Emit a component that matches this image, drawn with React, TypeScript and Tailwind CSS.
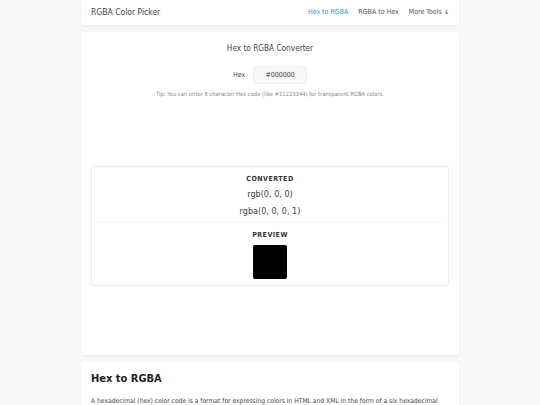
export default function App() {
  return (
    <div
      className="h-[405px] overflow-hidden bg-[#f7f8fa] text-[#333]"
      style={{ fontFamily: '"DejaVu Sans Condensed", "DejaVu Sans", sans-serif' }}
    >
      <div className="mx-auto w-[378px]">
        <header className="flex h-[25px] items-center justify-between rounded-b-[3px] bg-white pr-[10px] pl-[10px] shadow-[0_1px_3px_rgba(0,0,0,0.06)]">
          <span className="text-[8.5px] text-[#3f3f3f]">RGBA Color Picker</span>
          <nav className="flex gap-[10px] text-[7px] text-[#555]">
            <a className="text-[#3594cc]">Hex to RGBA</a>
            <a>RGBA to Hex</a>
            <a>More Tools ↓</a>
          </nav>
        </header>

        <main className="mt-[7px] flex h-[323px] flex-col rounded-[3px] bg-white px-[10px] pt-[10px] shadow-[0_1px_3px_rgba(0,0,0,0.06)]">
          <h1 className="text-center text-[8.2px] leading-[12px] text-[#444]">Hex to RGBA Converter</h1>
          <div className="mt-[12px] flex items-center justify-center gap-[8px]">
            <label className="text-[7px] text-[#444]">Hex</label>
            <div className="flex h-[18px] w-[54px] items-center justify-center rounded-[2px] border border-[#eef0f3] bg-[#f7f8fa] text-[7px] text-[#444]">
              #000000
            </div>
          </div>
          <p className="mt-[6px] text-center text-[5.8px] text-[#888]">
            Tip: You can enter 8 character Hex code (like #11223344) for transparent RGBA colors.
          </p>

          <section className="mt-[67px] flex flex-col items-center rounded-[2px] border border-[#eceef1] px-[6px] pt-[7px] pb-[6px]">
            <div className="text-[7px] leading-[10px] font-bold tracking-[0.5px] text-[#333]">CONVERTED</div>
            <div className="mt-[4px] text-[9px] leading-[12px] text-[#444]">rgb(0, 0, 0)</div>
            <div className="mt-[5px] text-[9px] leading-[12px] text-[#444]">rgba(0, 0, 0, 1)</div>
            <div className="mt-[5px] h-px w-full bg-[#f0f1f3]" />
            <div className="mt-[7px] text-[7px] leading-[10px] font-bold tracking-[0.5px] text-[#333]">PREVIEW</div>
            <div className="mt-[5px] h-[34px] w-[34px] rounded-[2px] bg-black" />
          </section>
        </main>

        <article className="mt-[7px] rounded-[3px] bg-white px-[10px] pt-[9px] pb-4 shadow-[0_1px_3px_rgba(0,0,0,0.06)]">
          <h2 className="text-[11px] font-bold text-[#222]">Hex to RGBA</h2>
          <p className="mt-[8px] text-[6.7px] leading-[10px] text-[#444]">
            A hexadecimal (hex) color code is a format for expressing colors in HTML and XML in the form of a six hexadecimal
            digit number, where each pair of digits represents the red, green and blue components.
          </p>
        </article>
      </div>
    </div>
  );
}
